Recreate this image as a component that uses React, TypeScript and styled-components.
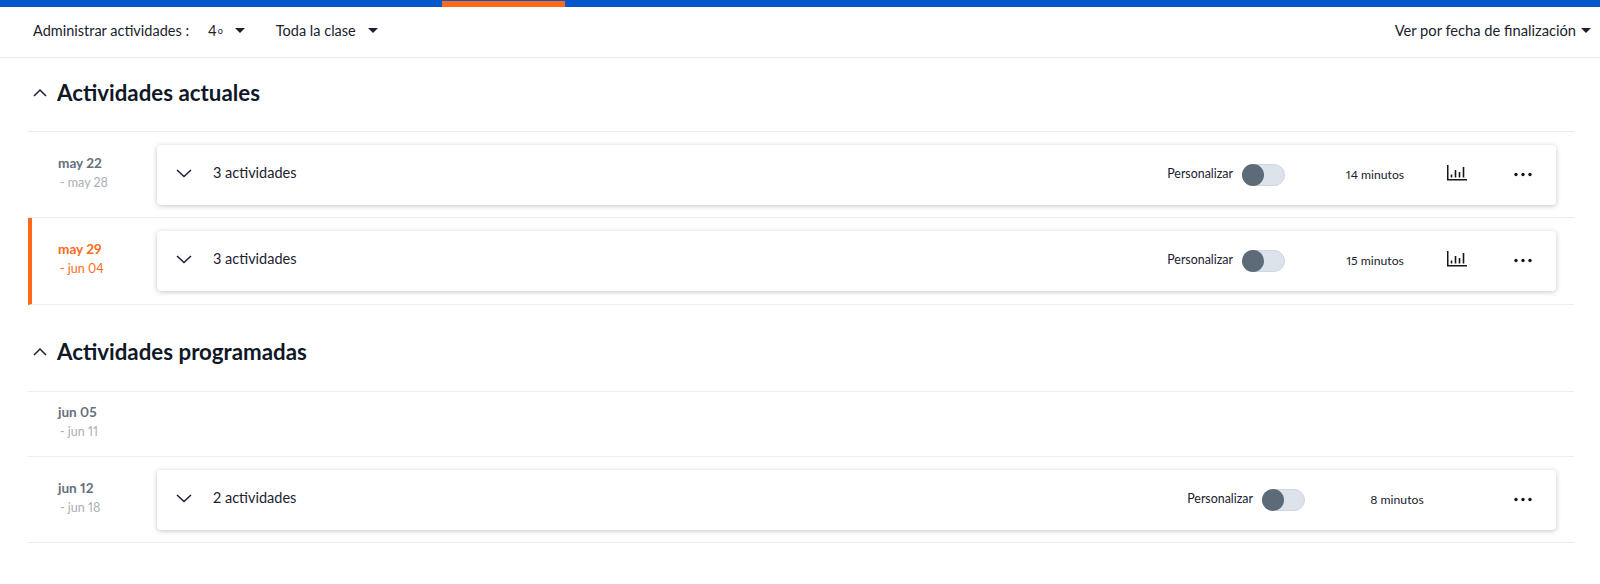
import React from 'react'
import styled, { createGlobalStyle } from 'styled-components'

const GlobalStyle = createGlobalStyle`
  html, body {
    margin: 0;
    padding: 0;
    background: #fff;
    font-family: Lato, "Open Sans", sans-serif;
    font-variant-numeric: proportional-nums;
    color: #1a2230;
  }
`

const Page = styled.div`
  width: 1600px;
  height: 584px;
  overflow: hidden;
  background: #fff;
`

const TopBar = styled.div`
  height: 7px;
  background: #0457cc;
  padding: 1px 0 0 442px;
  box-sizing: border-box;
`

const TopBarMarker = styled.div`
  width: 123px;
  height: 100%;
  background: #ff6a1a;
`

const Toolbar = styled.div`
  height: 51px;
  box-sizing: border-box;
  border-bottom: 1px solid #e9e9ec;
  padding: 0 9px 4px 33px;
  display: flex;
  align-items: center;
  font-size: 14.5px;
`

const ToolbarLabel = styled.span`
  margin-right: 19px;
`

const Select = styled.span`
  display: inline-flex;
  align-items: center;
  gap: 12px;
  margin-right: 31px;
  &:last-child { margin: 0 0 0 auto; gap: 5px; font-size: 14.7px; }
`

const Ordinal = styled.span`
  font-size: 9px;
  margin-left: 1px;
  position: relative;
  top: -2px;
`

const Caret = styled.span`
  width: 0;
  height: 0;
  border-left: 5px solid transparent;
  border-right: 5px solid transparent;
  border-top: 5px solid #1a2230;
`

const Section = styled.section`
  margin: 0 26px 0 28px;
`

const SectionTitle = styled.div<{ $top: number; $bottom: number }>`
  display: flex;
  align-items: center;
  gap: 9px;
  padding: ${p => p.$top}px 0 ${p => p.$bottom}px 4px;
  border-bottom: 1px solid #e8edf2;
`

const Title = styled.h2`
  margin: 0;
  font-size: 22.3px;
  line-height: 28px;
  font-weight: 700;
  color: #101828;
`

const Row = styled.div<{ $current?: boolean }>`
  display: flex;
  align-items: center;
  min-height: 65px;
  box-sizing: border-box;
  padding: 13px 18px ${p => (p.$current ? 13 : 12)}px 0;
  border-bottom: 1px solid #e8edf2;
  border-left: ${p => (p.$current ? '4px solid #ff6a1a' : '0')};
`

const Dates = styled.div<{ $current?: boolean }>`
  width: ${p => (p.$current ? 125 : 129)}px;
  padding-left: ${p => (p.$current ? 26 : 30)}px;
  margin-top: -5px;
  box-sizing: border-box;
  flex: none;
`

const DateStart = styled.div<{ $current?: boolean }>`
  font-size: 13.6px;
  line-height: 19px;
  font-weight: 700;
  color: ${p => (p.$current ? '#ff6a1a' : '#666f7c')};
`

const DateEnd = styled.div<{ $current?: boolean }>`
  font-size: 12.5px;
  line-height: 19px;
  padding-left: 2px;
  color: ${p => (p.$current ? '#ff6a1a' : '#a9afb8')};
`

const Card = styled.div`
  flex: 1;
  height: 60px;
  display: flex;
  align-items: center;
  padding: 0 24px 0 19px;
  background: #fff;
  border-radius: 4px;
  box-shadow: 0 1px 5px rgba(40, 50, 70, 0.28);
  color: #1a2230;
`

const CardChevron = styled.span`
  display: flex;
  margin-bottom: 4px;
`

const CardTitle = styled.span`
  margin: 0 auto 5px 21px;
  font-size: 14.5px;
`

const SmallLabel = styled.span`
  font-size: 12.4px;
  margin: 0 9px 3px 0;
`

const Toggle = styled.span`
  width: 43px;
  height: 22px;
  box-sizing: border-box;
  border-radius: 11px;
  background: #dde3ea;
  border: 1px solid #cfd6de;
  position: relative;
`

const ToggleKnob = styled.span`
  position: absolute;
  left: -1px;
  top: -1px;
  width: 22px;
  height: 22px;
  border-radius: 50%;
  background: #5d6a78;
`

const Duration = styled.span<{ $chart?: boolean }>`
  width: 120px;
  text-align: center;
  font-size: 12.2px;
  margin: 0 ${p => (p.$chart ? 12 : 10)}px 1px ${p => (p.$chart ? 30 : 32)}px;
`

const ChartSvg = styled.svg`
  flex: none;
  margin-bottom: 5px;
`

const Dots = styled.svg`
  margin: 0 0 2px 47px;
  flex: none;
`

const Chevron = ({ up }: { up?: boolean }) =>
  <svg width="16" height="10" viewBox="0 0 16 10" fill="none" stroke="#1a2230" strokeWidth="1.5">
    <path d={up ? 'M2 8L8 2L14 8' : 'M1 2L8 8.5L15 2'} />
  </svg>

const ChartIcon = () =>
  <ChartSvg width="20" height="16" viewBox="0 0 20 16" fill="none" stroke="#11151c">
    <path strokeWidth="1.5" d="M.75 0V14.75H20" />
    <path strokeWidth="1.6" d="M4.5 9.5V12.5M8.5 5V12.5M12.5 7V12.5M16.5 2V12.5" />
  </ChartSvg>

const MoreIcon = () =>
  <Dots width="18" height="5" viewBox="0 0 18 5" fill="#11151c">
    <circle cx="2" cy="2.5" r="1.7" />
    <circle cx="9" cy="2.5" r="1.7" />
    <circle cx="16" cy="2.5" r="1.7" />
  </Dots>

interface Week {
  start: string
  end: string
  current?: boolean
  count?: number
  minutes?: number
  chart?: boolean
}

const current: Week[] = [
  { start: 'may 22', end: '- may 28', count: 3, minutes: 14, chart: true },
  { start: 'may 29', end: '- jun 04', count: 3, minutes: 15, chart: true, current: true },
]

const scheduled: Week[] = [
  { start: 'jun 05', end: '- jun 11' },
  { start: 'jun 12', end: '- jun 18', count: 2, minutes: 8 },
]

const WeekRow = ({ week: w }: { week: Week }) =>
  <Row $current={w.current}>
    <Dates $current={w.current}>
      <DateStart $current={w.current}>{w.start}</DateStart>
      <DateEnd $current={w.current}>{w.end}</DateEnd>
    </Dates>
    {w.count && <Card>
      <CardChevron><Chevron /></CardChevron>
      <CardTitle>{w.count} actividades</CardTitle>
      <SmallLabel>Personalizar</SmallLabel>
      <Toggle><ToggleKnob /></Toggle>
      <Duration $chart={w.chart}>{w.minutes} minutos</Duration>
      {w.chart && <ChartIcon />}
      <MoreIcon />
    </Card>}
  </Row>

export default function App() {
  return <Page>
    <GlobalStyle />
    <TopBar><TopBarMarker /></TopBar>
    <Toolbar>
      <ToolbarLabel>Administrar actividades :</ToolbarLabel>
      <Select><span>4<Ordinal>o</Ordinal></span><Caret /></Select>
      <Select><span>Toda la clase</span><Caret /></Select>
      <Select><span>Ver por fecha de finalización</span><Caret /></Select>
    </Toolbar>
    <Section>
      <SectionTitle $top={21} $bottom={24}><Chevron up /><Title>Actividades actuales</Title></SectionTitle>
      {current.map(w => <WeekRow key={w.start} week={w} />)}
    </Section>
    <Section>
      <SectionTitle $top={33} $bottom={25}><Chevron up /><Title>Actividades programadas</Title></SectionTitle>
      {scheduled.map(w => <WeekRow key={w.start} week={w} />)}
    </Section>
  </Page>
}
